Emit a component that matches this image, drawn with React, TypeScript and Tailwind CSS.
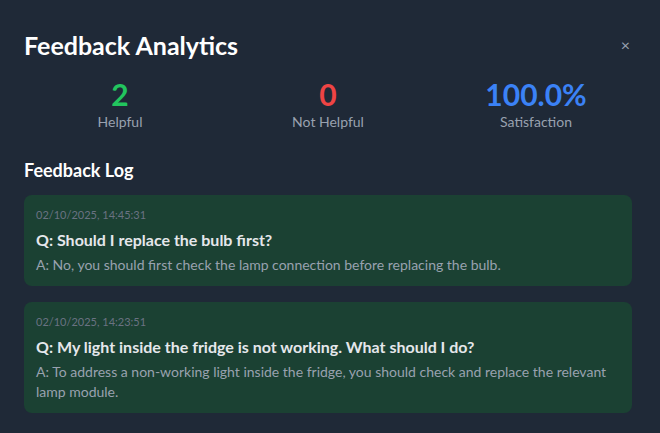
import React from 'react'

type Entry = { time: string; q: string; a: string }

const entries: Entry[] = [
  {
    time: '02/10/2025, 14:45:31',
    q: 'Should I replace the bulb first?',
    a: 'No, you should first check the lamp connection before replacing the bulb.',
  },
  {
    time: '02/10/2025, 14:23:51',
    q: 'My light inside the fridge is not working. What should I do?',
    a: 'To address a non-working light inside the fridge, you should check and replace the relevant lamp module.',
  },
]

const Stat = ({ value, label, color }: { value: string; label: string; color: string }) => (
  <div className="flex flex-col items-center">
    <div className={`text-[30px] leading-9 font-bold ${color}`}>{value}</div>
    <div className="text-sm leading-5 text-gray-400">{label}</div>
  </div>
)

export default function App() {
  return (
    <div
      className="min-h-[433px] w-[660px] bg-[#1f2937] pl-6 pr-7 pt-[29px] text-white"
      style={{ fontFamily: 'Lato, "Noto Sans", sans-serif' }}
    >
      {/* 标题 */}
      <div className="flex items-center justify-between mb-[15px]">
        <h1 className="text-[25px] leading-8 font-bold">Feedback Analytics</h1>
        <button className="text-gray-400 text-base leading-none pr-0.5">×</button>
      </div>

      {/* 统计 */}
      <div className="grid grid-cols-3 gap-4 mb-6">
        <Stat value="2" label="Helpful" color="text-[#22c55e]" />
        <Stat value="0" label="Not Helpful" color="text-[#ef4444]" />
        <Stat value="100.0%" label="Satisfaction" color="text-[#3b82f6]" />
      </div>

      <h2 className="text-lg leading-7 font-bold mb-[11px]">Feedback Log</h2>

      <div className="flex flex-col gap-4">
        {entries.map((e) => (
          <div key={e.time} className="rounded-lg bg-[#1b4133] px-3 pt-3 pb-[11px]">
            <div className="text-[11px] leading-4 text-gray-500">{e.time}</div>
            <div className="mt-[5px] text-base leading-6 font-bold text-gray-200">Q: {e.q}</div>
            <div className="mt-[3px] text-sm leading-5 text-gray-400">A: {e.a}</div>
          </div>
        ))}
      </div>
    </div>
  )
}
